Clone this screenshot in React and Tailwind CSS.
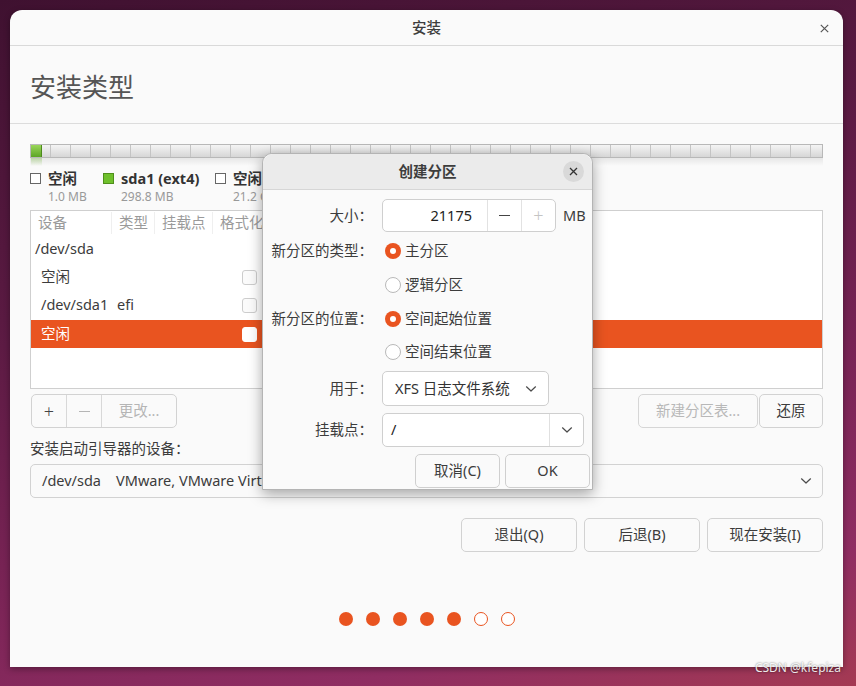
// ============================================
// Ubuntu installer: 安装类型 + 创建分区 dialog
// ============================================

const FONT = { fontFamily: '"Noto Sans", "Noto Sans CJK SC", sans-serif' }

const Chevron = ({ className = '' }) => (
    <svg className={className} width="12" height="8" viewBox="0 0 12 8" fill="none">
        <path d="M1.5 1.8 L6 6 L10.5 1.8" stroke="#4a4a4a" strokeWidth="1.2" strokeLinecap="round" strokeLinejoin="round" />
    </svg>
)

const Radio = ({ checked }) => (
    checked ? (
        <span className="w-[16px] h-[16px] rounded-full bg-[#e95420] flex items-center justify-center">
            <span className="w-[6px] h-[6px] rounded-full bg-white" />
        </span>
    ) : (
        <span className="w-[16px] h-[16px] rounded-full bg-white border border-[#b9b9b9]" />
    )
)

const Check = ({ white }) => (
    <span className={`w-[15px] h-[15px] rounded-[3px] border ${white ? 'bg-white border-white' : 'bg-[#fbfbfb] border-[#cdcdcd]'}`} />
)

const ROWS = [
    { dev: '/dev/sda', indent: false },
    { dev: '空闲', indent: true, check: true },
    { dev: '/dev/sda1', type: 'efi', indent: true, check: true },
    { dev: '空闲', indent: true, check: true, selected: true }
]

const LEGEND = [
    { name: '空闲', size: '1.0 MB', w: 'w-[73px]', box: 'border-[#666] bg-white' },
    { name: 'sda1 (ext4)', size: '298.8 MB', w: 'w-[112px]', box: 'border-[#4f8f1b] bg-[#6fc02c]' },
    { name: '空闲', size: '21.2 GB', w: '', box: 'border-[#666] bg-white' }
]

const Dialog = () => (
    <div className="absolute left-[252px] top-[143px] w-[331px] h-[337px] bg-[#fafafa] rounded-t-[10px] border border-[#b4b4b4] shadow-[0_4px_14px_rgba(0,0,0,0.35)] flex flex-col">
        <div className="h-[36px] shrink-0 bg-[#ebebeb] rounded-t-[10px] border-b border-[#d6d6d6] flex items-center justify-center relative">
            <span className="text-[14.5px] font-bold text-[#3d3d3d]">创建分区</span>
            <span className="absolute right-[8px] top-[7px] w-[21px] h-[21px] rounded-full bg-[#d9d9d9] flex items-center justify-center">
                <svg width="9" height="9" viewBox="0 0 9 9"><path d="M1 1 L8 8 M8 1 L1 8" stroke="#333" strokeWidth="1.3" /></svg>
            </span>
        </div>

        <div className="flex flex-col text-[14.5px] text-[#3c3c3c] pt-[9px]">
            {/* 大小 */}
            <div className="flex items-center h-[33px]">
                <span className="w-[110px] text-right">大小：</span>
                <div className="ml-[9px] w-[174px] h-[33px] bg-white border border-[#cfcfcf] rounded-[5px] flex">
                    <span className="w-[104px] flex items-center justify-end pr-[15px] text-[#222]">21175</span>
                    <span className="w-[34px] border-l border-[#e2e2e2] flex items-center justify-center">
                        <span className="w-[11px] h-[1.5px] bg-[#444]" />
                    </span>
                    <span className="flex-1 border-l border-[#e2e2e2] flex items-center justify-center text-[#c4c4c4] text-[18px] font-light">+</span>
                </div>
                <span className="ml-[7px] text-[#3c3c3c]">MB</span>
            </div>

            {/* 类型 */}
            <div className="flex items-center h-[35px] mt-[1px]">
                <span className="w-[110px] text-right">新分区的类型：</span>
                <span className="ml-[12px] flex items-center gap-[4px]"><Radio checked /><span>主分区</span></span>
            </div>
            <div className="flex items-center h-[34px]">
                <span className="w-[110px]" />
                <span className="ml-[12px] flex items-center gap-[4px]"><Radio /><span>逻辑分区</span></span>
            </div>

            {/* 位置 */}
            <div className="flex items-center h-[33px]">
                <span className="w-[110px] text-right">新分区的位置：</span>
                <span className="ml-[12px] flex items-center gap-[4px]"><Radio checked /><span>空间起始位置</span></span>
            </div>
            <div className="flex items-center h-[33px]">
                <span className="w-[110px]" />
                <span className="ml-[12px] flex items-center gap-[4px]"><Radio /><span>空间结束位置</span></span>
            </div>

            {/* 用于 */}
            <div className="flex items-center h-[35px] mt-[3px]">
                <span className="w-[110px] text-right">用于：</span>
                <div className="ml-[9px] w-[167px] h-[35px] bg-white border border-[#cfcfcf] rounded-[5px] flex items-center justify-between pl-[12px] pr-[11px]">
                    <span className="text-[#333]">XFS 日志文件系统</span>
                    <Chevron />
                </div>
            </div>

            {/* 挂载点 */}
            <div className="flex items-center h-[34px] mt-[7px]">
                <span className="w-[110px] text-right">挂载点：</span>
                <div className="ml-[9px] w-[202px] h-[34px] bg-white border border-[#cfcfcf] rounded-[5px] flex">
                    <span className="flex-1 flex items-center pl-[8px] text-[#222]">/</span>
                    <span className="w-[34px] border-l border-[#e0e0e0] flex items-center justify-center"><Chevron /></span>
                </div>
            </div>

            {/* buttons */}
            <div className="flex justify-end gap-[5px] mt-[7px] pr-[2px]">
                <button className="w-[85px] h-[34px] bg-[#fafafa] border border-[#cfcfcf] rounded-[5px] text-[#3c3c3c]">取消(C)</button>
                <button className="w-[85px] h-[34px] bg-[#fafafa] border border-[#cfcfcf] rounded-[5px] text-[#3c3c3c]">OK</button>
            </div>
        </div>
    </div>
)

export default function App() {
    return (
        <div
            className="w-[856px] h-[686px] overflow-hidden relative bg-[linear-gradient(165deg,#3f1130_0%,#5a1a42_35%,#7a2456_65%,#8f2d62_85%,#a43a53_100%)] pt-[10px] pl-[10px]"
            style={FONT}
        >
            <div className="w-[833px] h-[657px] bg-[#fafafa] rounded-t-[12px] shadow-[0_2px_6px_rgba(0,0,0,0.35)] relative flex flex-col">
                {/* title bar */}
                <div className="h-[36px] shrink-0 border-b border-[#d9d9d9] flex items-center justify-center relative">
                    <span className="text-[14.5px] text-[#3d3d3d] font-medium">安装</span>
                    <svg className="absolute right-[14px] top-[14px]" width="9" height="9" viewBox="0 0 9 9">
                        <path d="M0.8 0.8 L8.2 8.2 M8.2 0.8 L0.8 8.2" stroke="#555" strokeWidth="1.2" />
                    </svg>
                </div>

                {/* heading */}
                <div className="h-[78px] shrink-0 border-b border-[#dcdcdc] flex items-center pl-[20px] pt-[6px]">
                    <h1 className="text-[26px] text-[#555] font-normal">安装类型</h1>
                </div>

                <div className="px-[20px] flex flex-col">
                    {/* partition bar */}
                    <div className="mt-[20px] h-[14px] border border-[#b8b8b8] flex bg-[repeating-linear-gradient(90deg,transparent_0px,transparent_19px,#c4c4c4_19px,#c4c4c4_20px),linear-gradient(180deg,#f4f4f4,#d6d6d6)]">
                        <div className="w-[11px] h-full bg-[linear-gradient(180deg,#9ad65a,#5ca524)] border-r border-[#4d8a1c]" />
                    </div>
                    <div className="h-[8px] bg-[linear-gradient(180deg,rgba(0,0,0,0.08),rgba(0,0,0,0))] flex">
                        <div className="w-[11px] ml-[1px] h-full bg-[linear-gradient(180deg,rgba(110,180,50,0.35),rgba(110,180,50,0))]" />
                    </div>

                    {/* legend */}
                    <div className="flex mt-[3px] h-[41px]">
                        {LEGEND.map((l, i) => (
                            <div key={i} className={`flex ${l.w}`}>
                                <span className={`w-[11px] h-[11px] border mt-[4px] ${l.box}`} />
                                <div className="ml-[7px] flex flex-col">
                                    <span className="text-[14.5px] font-bold text-[#333] leading-[19px]">{l.name}</span>
                                    <span className="text-[12px] text-[#999] leading-[15px] mt-[1px]">{l.size}</span>
                                </div>
                            </div>
                        ))}
                    </div>

                    {/* table */}
                    <div className="h-[179px] border border-[#cfcfcf] bg-white flex flex-col">
                        <div className="h-[24px] flex items-center text-[14.5px] text-[#9a9a9a]">
                            <span className="w-[81px] pl-[7px] border-r border-[#efefef]">设备</span>
                            <span className="w-[43px] pl-[7px] border-r border-[#efefef]">类型</span>
                            <span className="w-[58px] pl-[7px] border-r border-[#efefef]">挂载点</span>
                            <span className="pl-[7px]">格式化?</span>
                        </div>
                        {ROWS.map((r, i) => (
                            <div
                                key={i}
                                className={`h-[28px] flex items-center text-[14.5px] ${r.selected ? 'bg-[#e95420] text-white mt-[1px]' : 'text-[#3c3c3c]'}`}
                            >
                                <span className={`${r.indent ? 'pl-[10px]' : 'pl-[4px]'} w-[86px]`}>{r.dev}</span>
                                <span className="w-[125px]">{r.type || ''}</span>
                                {r.check && <Check white={r.selected} />}
                            </div>
                        ))}
                    </div>

                    {/* table buttons */}
                    <div className="mt-[5px] flex justify-between h-[34px]">
                        <div className="flex border border-[#d2d2d2] rounded-[5px] text-[14.5px] ml-[1px]">
                            <span className="w-[34px] flex items-center justify-center text-[#444] text-[18px] font-light">+</span>
                            <span className="w-[35px] border-l border-[#d8d8d8] flex items-center justify-center">
                                <span className="w-[11px] h-[1px] bg-[#b5b5b5]" />
                            </span>
                            <span className="w-[75px] border-l border-[#d8d8d8] flex items-center justify-center text-[#b5b5b5]">更改...</span>
                        </div>
                        <div className="flex gap-[1px]">
                            <span className="w-[120px] border border-[#d6d6d6] rounded-[5px] flex items-center justify-center text-[14.5px] text-[#b8b8b8]">新建分区表...</span>
                            <span className="w-[64px] border border-[#d2d2d2] rounded-[5px] flex items-center justify-center text-[14.5px] text-[#3c3c3c]">还原</span>
                        </div>
                    </div>

                    <div className="mt-[10px] text-[14.5px] text-[#3c3c3c] h-[20px] leading-[20px]">安装启动引导器的设备：</div>

                    <div className="mt-[6px] h-[34px] border border-[#d2d2d2] rounded-[5px] flex items-center justify-between pl-[11px] pr-[10px] text-[14.5px] text-[#3c3c3c]">
                        <span className="whitespace-pre">/dev/sda    VMware, VMware Virtual S (21.5 GB)</span>
                        <Chevron />
                    </div>

                    {/* nav buttons */}
                    <div className="mt-[20px] flex justify-end gap-[7px]">
                        {['退出(Q)', '后退(B)', '现在安装(I)'].map(t => (
                            <span key={t} className="w-[116px] h-[34px] border border-[#d2d2d2] rounded-[5px] flex items-center justify-center text-[14.5px] text-[#3c3c3c]">{t}</span>
                        ))}
                    </div>

                    {/* progress dots */}
                    <div className="mt-[60px] flex justify-center gap-[13px]">
                        {[1, 1, 1, 1, 1, 0, 0].map((f, i) => (
                            <span
                                key={i}
                                className={`w-[14px] h-[14px] rounded-full ${f ? 'bg-[#e95420]' : 'bg-white border-[1.5px] border-[#e95420]'}`}
                            />
                        ))}
                    </div>
                </div>

                <Dialog />
            </div>

            <span className="absolute right-[15px] bottom-[9px] text-[12px] text-white/90 [text-shadow:0_0_2px_rgba(0,0,0,0.6)]">CSDN @kfepiza</span>
        </div>
    )
}
